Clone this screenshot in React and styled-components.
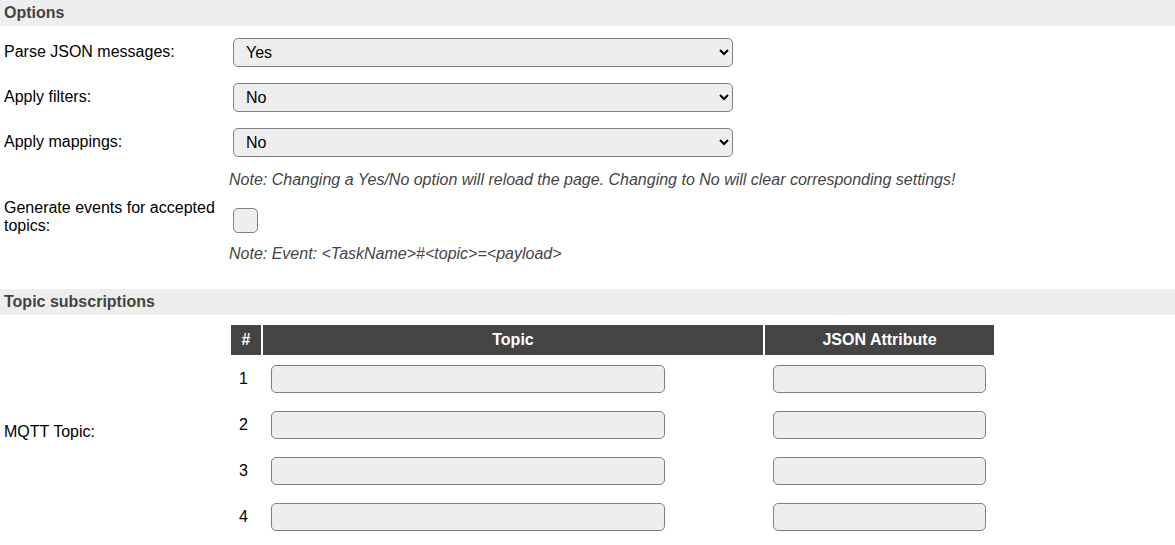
import React from "react";
import styled, { createGlobalStyle, css } from "styled-components";

const GlobalStyle = createGlobalStyle`
  *, *::before, *::after {
    box-sizing: border-box;
  }
  body {
    margin: 0;
    background: #fff;
    color: #000;
    font: 16px/18px "Liberation Sans", Arial, sans-serif;
  }
`;

const Form = styled.form`
  width: 100%;
`;

const SectionTitle = styled.h2`
  margin: 0;
  padding: 4px;
  background: #eee;
  color: #444;
  font-size: 16px;
  font-weight: bold;
  line-height: 18px;
`;

const OptionsBody = styled.div`
  padding: 4px 0 26px;
`;

const TopicsBody = styled.div`
  padding: 10px 0 6px;
`;

const Row = styled.div`
  display: grid;
  grid-template-columns: 229px minmax(0, 1fr);
  align-items: center;
`;

const labelStyle = css`
  padding: 0 10px 1px 4px;
`;

const Label = styled.label`
  ${labelStyle}
`;

const RowCaption = styled.span`
  ${labelStyle}
`;

const controlStyle = css`
  margin: 0;
  border: 1px solid #808080;
  border-radius: 5px;
  background-color: #eee;
  color: #000;
  font: inherit;
`;

const ControlCell = styled.div`
  padding: 8px 4px;
`;

const Select = styled.select`
  ${controlStyle}
  display: block;
  width: 100%;
  max-width: 500px;
  height: 29px;
  padding: 4px 8px;
`;

const TextInput = styled.input`
  ${controlStyle}
  display: block;
  width: ${(p) => p.$width};
  height: 28px;
  padding: 4px 8px;
`;

const CheckCell = styled.div`
  padding: 19px 4px 12px;
`;

const CheckBox = styled.input`
  ${controlStyle}
  appearance: none;
  display: block;
  width: 25px;
  height: 25px;

  &:checked {
    background-color: #07d;
  }
`;

const Note = styled.p`
  margin: 0 0 0 229px;
  padding-top: ${(p) => (p.$spaced ? "6px" : "0")};
  color: #444;
  font-style: italic;
`;

const TopicTable = styled.table`
  width: 100%;
  max-width: 767px;
  table-layout: fixed;
  border-collapse: separate;
  border-spacing: 2px 0;
`;

const HeadCell = styled.th`
  width: ${(p) => p.$width};
  height: 30px;
  padding: 6px 0;
  background: #444;
  color: #fff;
  font-weight: bold;
  text-align: center;
`;

const Cell = styled.td`
  padding: 10px 8px 8px;
`;

const yesNoOptions = [
  { id: "parse", label: "Parse JSON messages:", value: "Yes" },
  { id: "filters", label: "Apply filters:", value: "No" },
  { id: "mappings", label: "Apply mappings:", value: "No" },
];

const topics = [1, 2, 3, 4];

export default function App() {
  return (
    <>
      <GlobalStyle />
      <Form>
        <SectionTitle>Options</SectionTitle>
        <OptionsBody>
          {yesNoOptions.map(({ id, label, value }) => (
            <Row key={id}>
              <Label htmlFor={id}>{label}</Label>
              <ControlCell>
                <Select id={id} defaultValue={value}>
                  <option>No</option>
                  <option>Yes</option>
                </Select>
              </ControlCell>
            </Row>
          ))}
          <Note $spaced>
            Note: Changing a Yes/No option will reload the page. Changing to No
            will clear corresponding settings!
          </Note>
          <Row>
            <Label htmlFor="events">Generate events for accepted topics:</Label>
            <CheckCell>
              <CheckBox id="events" type="checkbox" />
            </CheckCell>
          </Row>
          <Note>{"Note: Event: <TaskName>#<topic>=<payload>"}</Note>
        </OptionsBody>

        <SectionTitle>Topic subscriptions</SectionTitle>
        <TopicsBody>
          <Row>
            <RowCaption id="topics-caption">MQTT Topic:</RowCaption>
            <TopicTable aria-labelledby="topics-caption">
              <thead>
                <tr>
                  <HeadCell $width="30px">#</HeadCell>
                  <HeadCell>Topic</HeadCell>
                  <HeadCell $width="229px">JSON Attribute</HeadCell>
                </tr>
              </thead>
              <tbody>
                {topics.map((n) => (
                  <tr key={n}>
                    <Cell>{n}</Cell>
                    <Cell>
                      <TextInput
                        $width="394px"
                        type="text"
                        aria-label={`Topic ${n}`}
                      />
                    </Cell>
                    <Cell>
                      <TextInput
                        $width="100%"
                        type="text"
                        aria-label={`JSON attribute ${n}`}
                      />
                    </Cell>
                  </tr>
                ))}
              </tbody>
            </TopicTable>
          </Row>
        </TopicsBody>
      </Form>
    </>
  );
}
